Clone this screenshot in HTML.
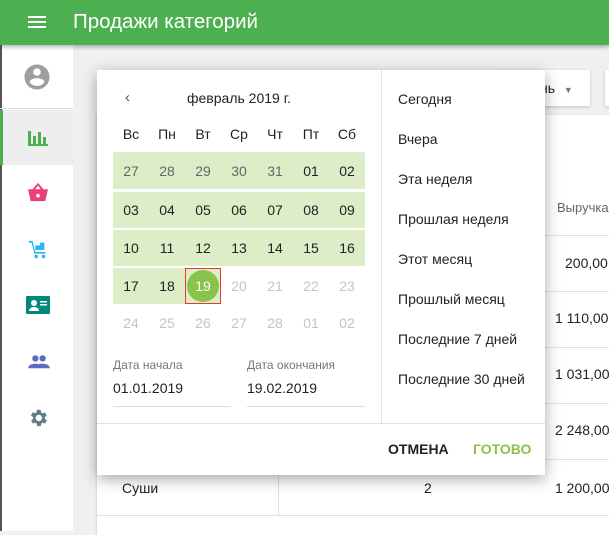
<!DOCTYPE html>
<html><head><meta charset="utf-8"><style>
*{margin:0;padding:0;box-sizing:border-box}
body{width:609px;height:531px;overflow:hidden;background:#f0f0f0;font-family:"Liberation Sans","Noto Sans CJK SC",sans-serif;position:relative;color:#222}
.hdr{position:absolute;left:0;top:0;width:609px;height:45px;background:#4caf50;color:#fff;box-shadow:0 2px 4px rgba(0,0,0,.3);z-index:3}
.hdr .t{position:absolute;left:73px;top:10px;font-size:20.5px}
.side{position:absolute;left:0;top:45px;width:73px;height:486px;background:#fff;border-left:2px solid #555}
.abs{position:absolute;white-space:nowrap}
.card{position:absolute;left:97px;top:115px;width:520px;height:420px;background:#fff;box-shadow:0 1px 3px rgba(0,0,0,.2)}
.line{position:absolute;left:97px;width:520px;height:1px;background:#e0e0e0}
.dlg{position:absolute;left:97px;top:70px;width:448px;height:405px;background:#fff;box-shadow:0 4px 14px rgba(0,0,0,.35);z-index:5}
.c{position:absolute;width:36px;text-align:center;font-size:14px}
.band{position:absolute;left:16px;width:252px;height:36px;background:#dcedc8}
.opt{position:absolute;left:301px;font-size:14px;color:#222;white-space:nowrap}
</style></head><body>
<div class="hdr">
<div class="abs" style="left:28px;top:16px;width:18px;height:2px;background:#fff"></div>
<div class="abs" style="left:28px;top:21px;width:18px;height:2px;background:#fff"></div>
<div class="abs" style="left:28px;top:26px;width:18px;height:2px;background:#fff"></div>
<div class="t">Продажи категорий</div></div>
<div class="side">
<svg class="abs" style="left:20px;top:17px" width="30" height="30" viewBox="0 0 24 24"><path fill="#9e9e9e" d="M12 2C6.5 2 2 6.5 2 12s4.5 10 10 10 10-4.5 10-10S17.5 2 12 2zm0 3a3 3 0 110 6 3 3 0 010-6zm0 14.2a7.2 7.2 0 01-6-3.2c0-2 4-3.1 6-3.1s6 1.1 6 3.1a7.2 7.2 0 01-6 3.2z"/></svg>
<div class="abs" style="left:-2px;top:63px;width:73px;height:1px;background:#e0e0e0"></div>
<div class="abs" style="left:-2px;top:65px;width:73px;height:55px;background:#eee;border-left:3px solid #4caf50"></div>
<svg class="abs" style="left:25px;top:82px" width="22" height="20" viewBox="0 0 22 20"><path fill="#4caf50" d="M1 4h3v15H1zM6 9h3v10H6zM11 5h3v14h-3zM16 10h3v9h-3zM1 17h20v2H1z"/></svg>
<svg class="abs" style="left:25px;top:137px" width="22" height="20" viewBox="0 0 24 22"><path fill="#ec407a" d="M12 1l-6 7H1l3 13h16l3-13h-5zM9 8l3-4 3 4z"/><circle cx="12" cy="15" r="2" fill="#fff"/></svg>
<svg class="abs" style="left:24px;top:194px" width="24" height="22" viewBox="0 0 24 24"><path fill="#29b6f6" d="M2 2h4l3 12h11v2H8L5 4H2zM9 7h6v5H9zM14 4h5v8h-4z"/><circle cx="10" cy="19" r="2" fill="#29b6f6"/><circle cx="18" cy="19" r="2" fill="#29b6f6"/></svg>
<svg class="abs" style="left:24px;top:251px" width="24" height="20" viewBox="0 0 24 20"><rect width="24" height="18" rx="1" fill="#00897b"/><circle cx="8" cy="7" r="3" fill="#fff"/><path fill="#fff" d="M3 15c0-3 3-4 5-4s5 1 5 4zM14 5h7v1.5h-7zM14 8h7v1.5h-7z"/></svg>
<svg class="abs" style="left:25px;top:308px" width="24" height="18" viewBox="0 0 24 20"><circle cx="8" cy="6" r="3.5" fill="#5c6bc0"/><circle cx="16" cy="6" r="3.5" fill="#5c6bc0"/><path fill="#5c6bc0" d="M0 17c0-4 5-5 8-5s8 1 8 5zM12 12c2-.5 4 0 4 0 3 0 8 1 8 5h-8z"/></svg>
<svg class="abs" style="left:25px;top:362px" width="22" height="22" viewBox="0 0 24 24"><path fill="#607d8b" d="M19.4 13a7.5 7.5 0 000-2l2.1-1.6-2-3.5-2.5 1a7.4 7.4 0 00-1.7-1L14.9 3h-4l-.4 2.7a7.4 7.4 0 00-1.7 1l-2.5-1-2 3.5L6.6 11a7.5 7.5 0 000 2l-2.1 1.6 2 3.5 2.5-1a7.4 7.4 0 001.7 1l.4 2.7h4l.4-2.7a7.4 7.4 0 001.7-1l2.5 1 2-3.5zM12.9 15.5a3.5 3.5 0 110-7 3.5 3.5 0 010 7z"/></svg>
</div>
<div class="abs" style="left:495px;top:70px;width:95px;height:36px;background:#fff;border-radius:2px;box-shadow:0 1px 3px rgba(0,0,0,.2);font-size:14px;padding:10px 0 0 45px">нь <span style="color:#777;font-size:9px;margin-left:5px">▼</span></div>
<div class="abs" style="left:605px;top:70px;width:10px;height:36px;background:#fff;box-shadow:0 1px 3px rgba(0,0,0,.2)"></div>
<div class="card"></div>
<div class="abs" style="left:557px;top:200px;font-size:13px;color:#666">Выручка</div>
<div class="line" style="top:235px"></div><div class="line" style="top:291px"></div><div class="line" style="top:347px"></div><div class="line" style="top:403px"></div><div class="line" style="top:459px"></div><div class="line" style="top:515px"></div>
<div class="abs" style="left:278px;top:459px;width:1px;height:56px;background:#e0e0e0"></div>
<div class="abs" style="left:565px;top:255px;font-size:14px">200,00</div>
<div class="abs" style="left:555px;top:310px;font-size:14px">1 110,00</div>
<div class="abs" style="left:555px;top:366px;font-size:14px">1 031,00</div>
<div class="abs" style="left:555px;top:422px;font-size:14px">2 248,00</div>
<div class="abs" style="left:555px;top:480px;font-size:14px">1 200,00</div>
<div class="abs" style="left:424px;top:480px;font-size:14px">2</div>
<div class="abs" style="left:122px;top:480px;font-size:14px">Суши</div>
<div class="dlg">
<div class="abs" style="left:28px;top:19px;font-size:15px;color:#555">‹</div>
<div class="abs" style="left:90px;top:20px;font-size:14px">февраль 2019 г.</div>
<div class="abs" style="left:284px;top:0;width:1px;height:353px;background:#e0e0e0"></div>
<div class="abs" style="left:0;top:353px;width:448px;height:1px;background:#e0e0e0"></div>
<div class="abs" style="left:16px;top:82px;width:252px;height:1px;background:#e8e8e8"></div>
<div class="band" style="top:83px"></div><div class="band" style="top:122px"></div><div class="band" style="top:160px"></div><div class="band" style="top:198px;width:108px"></div>
<div class="abs" style="left:88px;top:198px;width:36px;height:36px;border:1px solid #e53935"></div>
<div class="abs" style="left:90px;top:200px;width:32px;height:32px;border-radius:50%;background:#8bc34a"></div>
<div id="g"></div>
<div class="abs" style="left:16px;top:288px;font-size:12px;color:#777">Дата начала</div>
<div class="abs" style="left:16px;top:310px;font-size:14px">01.01.2019</div>
<div class="abs" style="left:16px;top:336px;width:118px;height:1px;background:#ddd"></div>
<div class="abs" style="left:150px;top:288px;font-size:12px;color:#777">Дата окончания</div>
<div class="abs" style="left:150px;top:310px;font-size:14px">19.02.2019</div>
<div class="abs" style="left:150px;top:336px;width:118px;height:1px;background:#ddd"></div>
<div class="opt" style="top:21px">Сегодня</div><div class="opt" style="top:61px">Вчера</div><div class="opt" style="top:101px">Эта неделя</div><div class="opt" style="top:141px">Прошлая неделя</div><div class="opt" style="top:181px">Этот месяц</div><div class="opt" style="top:221px">Прошлый месяц</div><div class="opt" style="top:261px">Последние 7 дней</div><div class="opt" style="top:301px">Последние 30 дней</div>
<div class="abs" style="left:291px;top:371px;font-size:14px;font-weight:bold;color:#222">ОТМЕНА</div>
<div class="abs" style="left:376px;top:371px;font-size:14px;font-weight:bold;color:#8bc34a">ГОТОВО</div>
</div>
<script>
var g=document.getElementById('g'),h='';
var heads=['Вс','Пн','Вт','Ср','Чт','Пт','Сб'];
var rows=[['27','28','29','30','31','01','02'],['03','04','05','06','07','08','09'],['10','11','12','13','14','15','16'],['17','18','19','20','21','22','23'],['24','25','26','27','28','01','02']];
for(var i=0;i<7;i++)h+='<div class="c" style="left:'+(16+i*36)+'px;top:56px">'+heads[i]+'</div>';
var tops=[93,132,170,208,245];
for(var r=0;r<5;r++)for(var i=0;i<7;i++){var col='#222';if(r==0&&i<5)col='#666';if((r==3&&i>2)||r==4)col='#c4c4c4';if(r==3&&i==2)col='#fff';h+='<div class="c" style="left:'+(16+i*36)+'px;top:'+tops[r]+'px;color:'+col+'">'+rows[r][i]+'</div>';}
g.innerHTML=h;
</script>
</body></html>
